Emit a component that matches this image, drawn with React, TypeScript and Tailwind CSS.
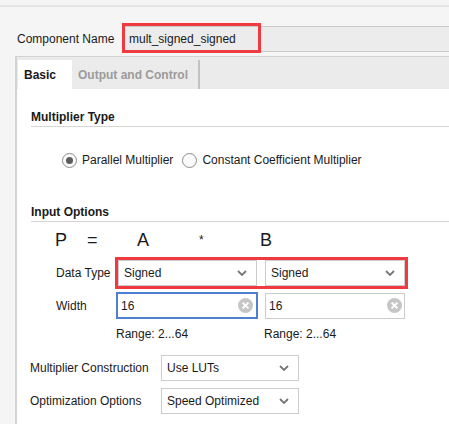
import React from 'react';

function Chevron() {
  return (
    <svg width="10" height="6" viewBox="0 0 10 6" className="shrink-0">
      <path d="M1 1l4 4 4-4" fill="none" stroke="#777777" strokeWidth="1.8" />
    </svg>
  );
}

function ClearIcon() {
  return (
    <svg width="15" height="15" viewBox="0 0 15 15" className="shrink-0">
      <circle cx="7.5" cy="7.5" r="7.5" fill="#c6c6c6" />
      <path d="M4.6 4.6l5.8 5.8M10.4 4.6l-5.8 5.8" stroke="#ffffff" strokeWidth="2" />
    </svg>
  );
}

function Radio({ checked }: { checked?: boolean }) {
  return (
    <span className="flex h-[15px] w-[15px] shrink-0 items-center justify-center rounded-full border border-[#8c8c8c] bg-[#fafafa]">
      {checked && <span className="h-[7px] w-[7px] rounded-full bg-[#5c5c5c]" />}
    </span>
  );
}

function Select({ value, className = '' }: { value: string; className?: string }) {
  return (
    <div
      className={`flex h-[26px] items-center justify-between border border-[#cccccc] bg-white pl-[5px] pr-[9px] ${className}`}
    >
      <span>{value}</span>
      <Chevron />
    </div>
  );
}

function Heading({ children }: { children: React.ReactNode }) {
  return (
    <div className="ml-[14px] border-b border-[#d6d6d6] pb-[2px] text-[12px] leading-[14px] font-bold">
      {children}
    </div>
  );
}

export default function App() {
  return (
    <div className="h-[424px] w-[449px] overflow-hidden bg-[#f5f5f5] font-['Liberation_Sans',Arial,sans-serif] text-[12px] leading-[14px] text-[#1a1a1a]">
      <div className="h-[5px]" />
      <div className="h-[2px] bg-[#e6e6e6]" />
      <div className="h-[19px]" />

      {/* component name */}
      <div className="relative flex h-[26px] items-center">
        <span className="w-[124px] shrink-0 pl-[17px]">Component Name</span>
        <div className="flex h-full flex-1 items-center border-y border-[#c9c9c9] bg-[#ececec] pl-[5px]">
          mult_signed_signed
        </div>
        <div className="pointer-events-none absolute top-[-3px] left-[122px] h-[30px] w-[139px] border-[3px] border-[#ef3b3f]" />
      </div>

      <div className="h-[4px]" />

      {/* tab panel */}
      <div className="ml-[15px] h-full border-t border-l-2 border-[#d3d3d3]">
        <div className="flex h-[32px] items-end bg-[#ebebeb]">
          <div className="ml-[1px] flex h-[29px] w-[54px] items-center bg-white pl-[6px] font-bold">Basic</div>
          <div className="flex h-[29px] w-[126px] items-center pl-[6px] font-bold text-[#9b9b9b]">
            Output and Control
          </div>
          <div className="h-[29px] w-[2px] bg-[#c3c3c3]" />
        </div>

        <div className="h-full bg-white pt-[21px]">
          <Heading>Multiplier Type</Heading>

          <div className="mt-[25px] flex h-[16px] items-center pl-[45px]">
            <Radio checked />
            <span className="ml-[5px]">Parallel Multiplier</span>
            <span className="ml-[9px]">
              <Radio />
            </span>
            <span className="ml-[5px]">Constant Coefficient Multiplier</span>
          </div>

          <div className="mt-[37px]">
            <Heading>Input Options</Heading>
          </div>

          <div className="mt-[8px] flex h-[20px] items-center pl-[38px] text-[18px] leading-[20px]">
            <span className="w-[32px]">P</span>
            <span className="w-[50px]">=</span>
            <span className="w-[62px]">A</span>
            <span className="w-[61px] text-[12px]">*</span>
            <span>B</span>
          </div>

          <div className="mt-[10px] flex items-center pl-[39px]">
            <span className="w-[62px] shrink-0">Data Type</span>
            <div className="relative flex gap-[8px]">
              <Select value="Signed" className="w-[139px]" />
              <Select value="Signed" className="w-[140px]" />
              <div className="pointer-events-none absolute top-[-3px] left-[-3px] h-[32px] w-[293px] border-[3px] border-[#ef3b3f]" />
            </div>
          </div>

          <div className="mt-[6px] flex items-center pl-[39px]">
            <span className="w-[60px] shrink-0">Width</span>
            <div className="flex h-[27px] w-[142px] items-center justify-between border-2 border-[#4f7fd2] pr-[3px] pl-[3px]">
              <span>16</span>
              <ClearIcon />
            </div>
            <div className="ml-[7px] flex h-[26px] w-[140px] items-center justify-between border border-[#cccccc] pr-[2px] pl-[3px]">
              <span>16</span>
              <ClearIcon />
            </div>
          </div>

          <div className="mt-[8px] flex pl-[99px]">
            <span className="w-[148px]">Range: 2...64</span>
            <span>Range: 2...64</span>
          </div>

          <div className="mt-[14px] flex items-center pl-[13px]">
            <span className="w-[131px] shrink-0">Multiplier Construction</span>
            <Select value="Use LUTs" className="w-[138px] pr-[8px]" />
          </div>

          <div className="mt-[7px] flex items-center pl-[13px]">
            <span className="w-[131px] shrink-0">Optimization Options</span>
            <Select value="Speed Optimized" className="w-[138px] pr-[8px]" />
          </div>
        </div>
      </div>
    </div>
  );
}
